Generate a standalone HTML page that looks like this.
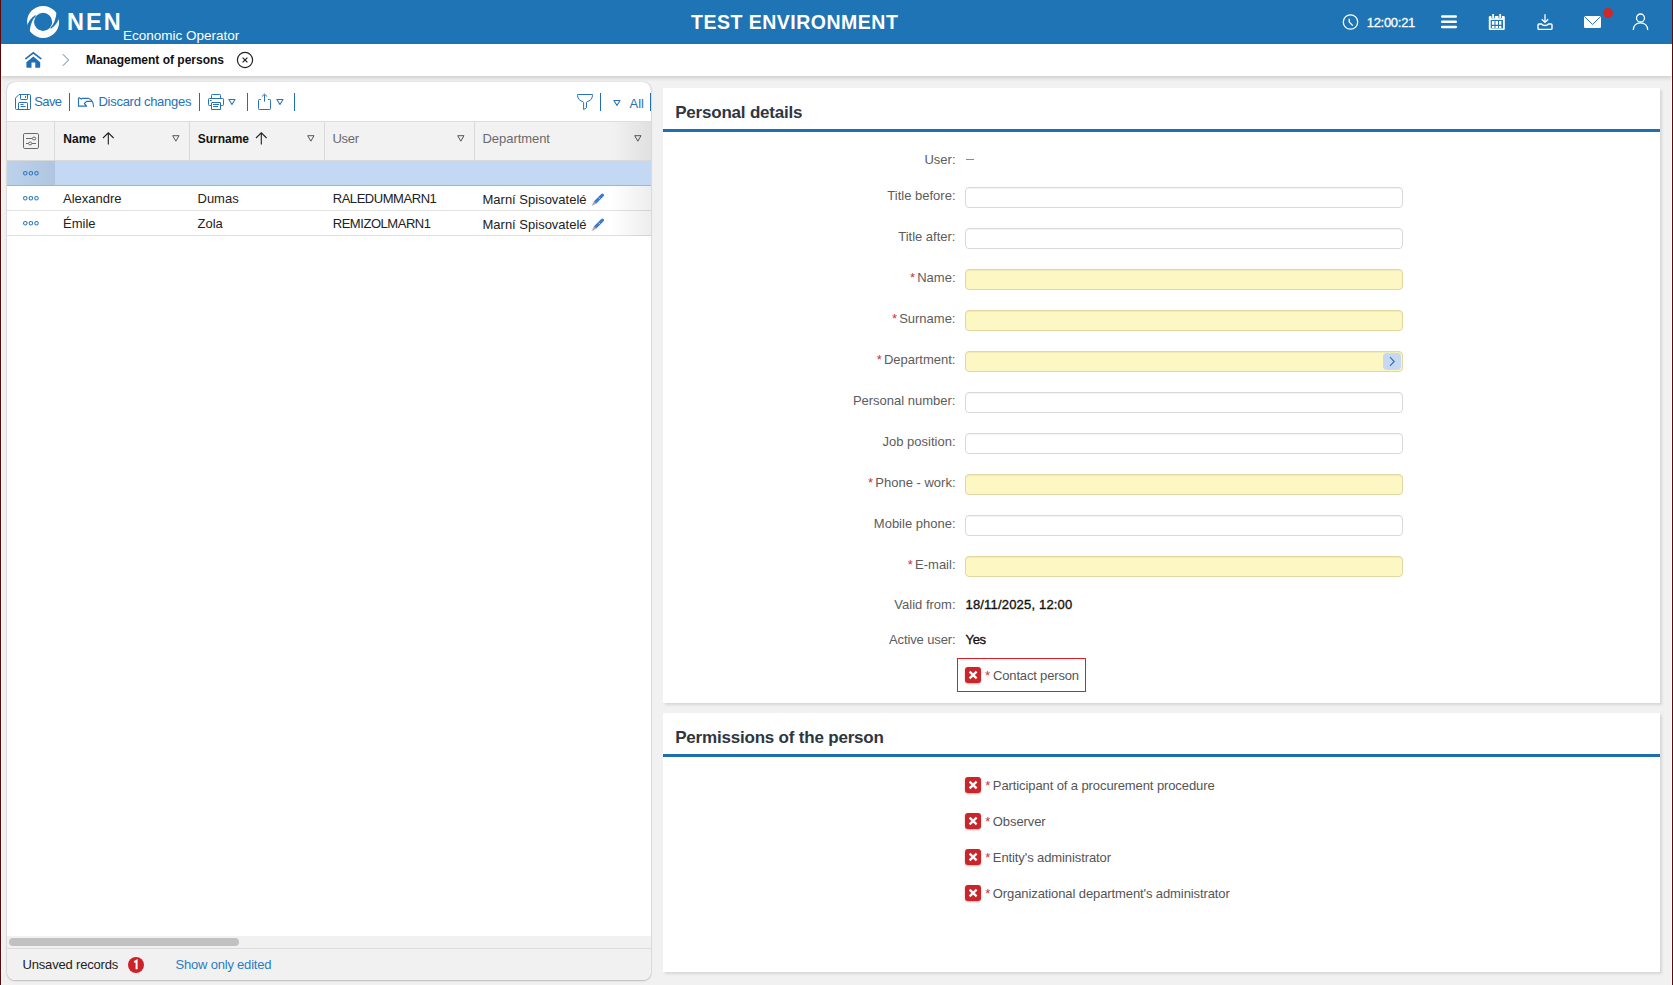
<!DOCTYPE html>
<html><head><meta charset="utf-8">
<style>
*{box-sizing:border-box;margin:0;padding:0}
html,body{width:1673px;height:985px;overflow:hidden}
body{background:#f1f1f1;font-family:"Liberation Sans",sans-serif;position:relative;color:#222}
.a{position:absolute;white-space:nowrap;line-height:1}
svg{position:absolute;overflow:visible}
#bl{left:0;top:0;width:1px;height:985px;background:#5c0a0a}
#br{left:1672px;top:0;width:1px;height:985px;background:#5c0a0a}
#hdr{left:1px;top:0;width:1671px;height:44px;background:#1e74b4}
#crumb{left:1px;top:44px;width:1671px;height:32px;background:#fff;box-shadow:0 1.5px 4px rgba(0,0,0,.15)}
#lp{left:7px;top:82px;width:644px;height:898px;background:#fff;border-radius:8px;box-shadow:0 0 1px rgba(0,0,0,.35),0 1px 2px rgba(0,0,0,.2);overflow:hidden}
.rp{position:absolute;background:#fff;box-shadow:1.5px 1.5px 2.5px rgba(0,0,0,.11)}
.title{position:absolute;left:12.2px;font-weight:bold;font-size:17px;letter-spacing:-0.2px;line-height:1;color:#30363f}
.bline{position:absolute;left:0;width:997px;height:3px;background:#1e6fb0}
.lbl{position:absolute;right:717.5px;font-size:13px;line-height:1;color:#5c5c5c;text-align:right;white-space:nowrap}
.req{color:#c8323a;font-size:13px;margin-right:2.2px}
.inp{position:absolute;left:965px;width:438px;height:21px;border:1px solid #d9d9d9;border-radius:4px;background:#fff;box-shadow:inset 0 1px 1px rgba(0,0,0,.05)}
.inp.y{background:#fdf7c3;border-color:#e0d8a0}
.cb{position:absolute;width:16px;height:16px;border-radius:3px;background:#c9262c;box-shadow:0 1px 2px rgba(160,0,0,.35)}
.cbl{position:absolute;font-size:13px;line-height:1;color:#555;white-space:nowrap;letter-spacing:-0.1px}
.sep{position:absolute;width:1px;height:18px;top:11px;background:#1f70b2}
.tb{position:absolute;font-size:13px;line-height:1;color:#2771b6;white-space:nowrap}
.th{position:absolute;font-size:12px;font-weight:bold;line-height:1;color:#111;white-space:nowrap}
.td{position:absolute;font-size:13px;line-height:1;color:#222;white-space:nowrap}
</style></head>
<body>
<div id="bl" class="a"></div><div id="br" class="a"></div>
<div class="a" style="left:1px;top:76px;width:1px;height:909px;background:#fcfcfc"></div><div class="a" style="left:1671px;top:76px;width:1px;height:909px;background:#fcfcfc"></div>

<!-- HEADER -->
<div id="hdr" class="a"></div>
<svg style="left:25px;top:4px" width="36" height="36" viewBox="0 0 36 36">
  <circle cx="18.1" cy="17.9" r="12.55" fill="none" stroke="#fff" stroke-width="6.9"/>
  <path d="M1.2 24.2 Q3.4 15.3 10.3 11.0 L10.9 12.1 Q5.8 16.8 4.6 27.6 Z" fill="#1e74b4"/>
  <path d="M35 11.6 Q32.8 20.5 25.9 24.8 L25.3 23.7 Q30.4 19 31.6 8.2 Z" fill="#1e74b4"/>
</svg>
<div class="a" style="left:67px;top:10.8px;font-size:23.5px;font-weight:bold;color:#fff;letter-spacing:2px">NEN</div>
<div class="a" style="left:123px;top:28.5px;font-size:13.5px;color:#fff">Economic Operator</div>
<div class="a" style="left:691px;top:12.6px;font-size:19.5px;font-weight:bold;color:#fff;letter-spacing:0.5px">TEST ENVIRONMENT</div>
<!-- clock -->
<svg style="left:1342px;top:14px" width="17" height="16" viewBox="0 0 17 16">
  <circle cx="8.5" cy="8" r="7.2" fill="none" stroke="#fff" stroke-width="1.3"/>
  <path d="M7.2 4.8 V8 L10.8 11.6" fill="none" stroke="#fff" stroke-width="1.3"/>
</svg>
<div class="a" style="left:1366.7px;top:16px;font-size:13px;color:#fff;letter-spacing:-0.28px;-webkit-text-stroke:0.3px #fff">12:00:21</div>
<!-- hamburger -->
<svg style="left:1441px;top:15px" width="16" height="14" viewBox="0 0 16 14">
  <path d="M1.2 1.6 H14.8 M1.2 6.8 H14.8 M1.2 12 H14.8" stroke="#fff" stroke-width="2.5" stroke-linecap="round"/>
</svg>
<!-- calendar -->
<svg style="left:1488px;top:14px" width="18" height="17" viewBox="0 0 18 17">
  <rect x="0.8" y="2" width="16" height="13.9" rx="1.2" fill="#fff"/>
  <rect x="2.7" y="5.9" width="12.3" height="8.5" fill="#1e74b4"/>
  <path d="M3.9 7.1h2.6v3.7h-2.6zM7.5 7.1h2.5v3.7h-2.5zM11 7.1h2.4v3.7h-2.4zM3.9 12h2.6v2h-2.6zM7.5 12h2.5v2h-2.5zM11 12h2.4v2h-2.4z" fill="#fff"/>
  <path d="M5.1 0 V4.2 M12.2 0 V4.2" stroke="#1e74b4" stroke-width="3.4"/>
  <path d="M5.1 0.1 V4 M12.2 0.1 V4" stroke="#fff" stroke-width="1.8"/>
</svg>
<!-- download -->
<svg style="left:1537px;top:14px" width="16" height="16" viewBox="0 0 16 16">
  <path d="M8 0.2 V8.2 M4.8 5.2 L8 8.4 L11.2 5.2" fill="none" stroke="#fff" stroke-width="1.3"/>
  <path d="M2 10 H4.5 C6 12 10 12 11.5 10 H14 C14.6 10 15 10.4 15 11 V14.4 C15 15 14.6 15.4 14 15.4 H2 C1.4 15.4 1 15 1 14.4 V11 C1 10.4 1.4 10 2 10 Z" fill="none" stroke="#fff" stroke-width="1.4"/>
</svg>
<!-- mail -->
<svg style="left:1584px;top:16px" width="17" height="12" viewBox="0 0 17 12">
  <rect x="0" y="0" width="17" height="12" rx="1.5" fill="#fff"/>
  <path d="M0.6 0.8 L8.5 8.4 L16.4 0.8" fill="none" stroke="#1e74b4" stroke-width="1"/>
</svg>
<svg style="left:1603px;top:8px" width="10" height="10" viewBox="0 0 10 10"><circle cx="5" cy="5" r="5" fill="#cc2a28"/></svg>
<!-- user -->
<svg style="left:1632px;top:13px" width="17" height="17" viewBox="0 0 17 17">
  <circle cx="8.5" cy="5" r="4" fill="none" stroke="#fff" stroke-width="1.3"/>
  <path d="M1.3 17 C1.3 12.3 4.5 9.8 8.5 9.8 C12.5 9.8 15.7 12.3 15.7 17" fill="none" stroke="#fff" stroke-width="1.3"/>
</svg>

<!-- BREADCRUMB -->
<div id="crumb" class="a"></div>
<svg style="left:25px;top:52px" width="17" height="16" viewBox="0 0 17 16">
  <path d="M0.8 6.6 L8.3 0.8 L15.8 6.6" fill="none" stroke="#1e6fb3" stroke-width="1.6" stroke-linecap="round"/>
  <path d="M1.4 10.2 L8.3 4.4 L15.2 10.2 V15 C15.2 15.5 14.8 15.8 14.3 15.8 H10.3 V10.6 H6.5 V15.8 H2.3 C1.8 15.8 1.4 15.5 1.4 15 Z" fill="#1e6fb3"/>
</svg>
<svg style="left:61px;top:53px" width="10" height="14" viewBox="0 0 10 14">
  <path d="M1.8 1.2 L7.6 7 L1.8 12.8" fill="none" stroke="#5a7fa8" stroke-width="1"/>
</svg>
<div class="a" style="left:86px;top:54px;font-size:12px;font-weight:bold;color:#111">Management of persons</div>
<svg style="left:236px;top:51px" width="18" height="18" viewBox="0 0 18 18">
  <circle cx="9" cy="9" r="7.6" fill="none" stroke="#222" stroke-width="1.2"/>
  <path d="M6.6 6.6 L11.4 11.4 M11.4 6.6 L6.6 11.4" stroke="#222" stroke-width="1.2"/>
</svg>

<!-- LEFT PANEL -->
<div id="lp" class="a">
  <!-- toolbar -->
  <svg style="left:8px;top:12px" width="17" height="17" viewBox="0 0 17 17">
    <path d="M4 0.5 H14.5 Q15.5 0.5 15.5 1.5 V14.5 Q15.5 15.5 14.5 15.5 H1.5 Q0.5 15.5 0.5 14.5 V4.1 Z" fill="none" stroke="#2a72b8" stroke-width="1" stroke-linejoin="round"/>
    <path d="M5.5 0.8 V4.8 Q5.5 5.5 6.2 5.5 H11.8 Q12.5 5.5 12.5 4.8 V0.8" fill="none" stroke="#2a72b8" stroke-width="1"/>
    <path d="M10.5 2 V3.8" stroke="#2a72b8" stroke-width="1"/>
    <path d="M3.5 15.2 V9.2 Q3.5 8.5 4.2 8.5 H11.8 Q12.5 8.5 12.5 9.2 V15.2" fill="none" stroke="#2a72b8" stroke-width="1"/>
    <path d="M5.5 10.5 H8.5 M5.5 12.5 H10.5" stroke="#2a72b8" stroke-width="1"/>
  </svg>
  <div class="tb" style="left:27.2px;top:12.8px;letter-spacing:-0.6px">Save</div>
  <div class="sep" style="left:62px"></div>
  <svg style="left:70px;top:14px" width="18" height="12" viewBox="0 0 18 12">
    <path d="M16.5 10.6 C16.5 7 14.5 3.4 11.2 2.3 H5.3 L4.3 3.1 L2.6 1.9 C2 1.7 1.5 2.1 1.5 2.7 V10.2 H9.6 L7.4 7.5 L9.6 5.3 H14.2" fill="none" stroke="#2a72b8" stroke-width="1.2" stroke-linejoin="round" stroke-linecap="round"/>
  </svg>
  <div class="tb" style="left:91.5px;top:12.7px;letter-spacing:-0.28px">Discard changes</div>
  <div class="sep" style="left:192px"></div>
  <svg style="left:201px;top:12px" width="17" height="17" viewBox="0 0 17 17">
    <path d="M3.5 4.5 V1.3 Q3.5 0.5 4.3 0.5 H11.7 Q12.5 0.5 12.5 1.3 V4.5" fill="none" stroke="#2a72b8" stroke-width="1"/>
    <path d="M3.5 11.5 H1.3 Q0.5 11.5 0.5 10.7 V5.3 Q0.5 4.5 1.3 4.5 H14.7 Q15.5 4.5 15.5 5.3 V10.7 Q15.5 11.5 14.7 11.5 H12.5" fill="none" stroke="#2a72b8" stroke-width="1"/>
    <path d="M3.5 15.5 V9 Q3.5 8.5 4 8.5 H12.5 V15.5 Z" fill="#fff" stroke="#2a72b8" stroke-width="1"/>
    <path d="M5 10.5 H11 M5 12.5 H10 M2 6.5 H3.6" stroke="#2a72b8" stroke-width="1"/>
  </svg>
  <svg style="left:221px;top:16px" width="8" height="8" viewBox="0 0 8 8"><path d="M0.9 1.5 H7 L3.95 6.5 Z" fill="none" stroke="#2a72b8" stroke-width="1.05" stroke-linejoin="round"/></svg>
  <div class="sep" style="left:240px"></div>
  <svg style="left:250px;top:11px" width="15" height="18" viewBox="0 0 15 18">
    <path d="M4 6.5 H2.3 Q1.5 6.5 1.5 7.3 V15.7 Q1.5 16.5 2.3 16.5 H12.7 Q13.5 16.5 13.5 15.7 V7.3 Q13.5 6.5 12.7 6.5 H11" fill="none" stroke="#2a72b8" stroke-width="1"/>
    <path d="M7.5 8.7 V1.6 M4.8 3.6 L7.5 1 L10.2 3.6" fill="none" stroke="#2a72b8" stroke-width="1"/>
  </svg>
  <svg style="left:268.5px;top:16px" width="8" height="8" viewBox="0 0 8 8"><path d="M0.9 1.5 H7 L3.95 6.5 Z" fill="none" stroke="#2a72b8" stroke-width="1.05" stroke-linejoin="round"/></svg>
  <div class="sep" style="left:287px"></div>
  <svg style="left:570px;top:12px" width="17" height="17" viewBox="0 0 17 17">
    <path d="M0.5 0.5 H15.5 V1.5 C15.5 5 12.6 7.1 10.2 7.6 Q9.5 7.8 9.5 8.5 V13.7 L6.6 15.5 V8.5 Q6.5 7.8 5.8 7.6 C3.4 7.1 0.5 5 0.5 1.5 Z" fill="none" stroke="#2a72b8" stroke-width="1" stroke-linejoin="round"/>
  </svg>
  <div class="sep" style="left:593px"></div>
  <svg style="left:606px;top:16.5px" width="8" height="8" viewBox="0 0 8 8"><path d="M0.9 1.5 H7 L3.95 6.5 Z" fill="none" stroke="#2a72b8" stroke-width="1.05" stroke-linejoin="round"/></svg>
  <div class="tb" style="left:622.5px;top:15px">All</div>
  <div class="sep" style="left:643px"></div>

  <!-- table header -->
  <div class="a" style="left:0;top:39px;width:644px;height:40px;background:#f2f2f2;border-top:1px solid #dedede;border-bottom:1px solid #d8d8d8"></div>
  <div class="a" style="left:47px;top:40px;width:1px;height:38px;background:#d9d9d9"></div>
  <div class="a" style="left:182px;top:40px;width:1px;height:38px;background:#d9d9d9"></div>
  <div class="a" style="left:317px;top:40px;width:1px;height:38px;background:#d9d9d9"></div>
  <div class="a" style="left:467px;top:40px;width:1px;height:38px;background:#d9d9d9"></div>
  <svg style="left:16px;top:51px" width="16" height="16" viewBox="0 0 16 16">
    <rect x="0.5" y="0.5" width="15" height="15" rx="1.3" fill="none" stroke="#6a6a6a" stroke-width="1"/>
    <path d="M3 5.5 H9.6 M3 10.5 H13" stroke="#6a6a6a" stroke-width="1"/>
    <ellipse cx="11.1" cy="5.5" rx="1.7" ry="1.4" fill="#f2f2f2" stroke="#6a6a6a" stroke-width="1"/>
    <ellipse cx="7.2" cy="10.5" rx="1.7" ry="1.4" fill="#f2f2f2" stroke="#6a6a6a" stroke-width="1"/>
  </svg>
  <div class="th" style="left:56.3px;top:51.1px">Name</div>
  <svg style="left:95px;top:50px" width="13" height="13" viewBox="0 0 13 13"><path d="M6.3 12.5 V0.8 M1 6 L6.3 0.8 L11.6 6" fill="none" stroke="#222" stroke-width="1.1"/></svg>
  <svg style="left:165px;top:53px" width="8" height="7" viewBox="0 0 8 7"><path d="M0.7 0.7 H7 L3.85 6.2 Z" fill="none" stroke="#555" stroke-width="1" stroke-linejoin="round"/></svg>
  <div class="th" style="left:190.7px;top:51.4px">Surname</div>
  <svg style="left:248px;top:50px" width="13" height="13" viewBox="0 0 13 13"><path d="M6.3 12.5 V0.8 M1 6 L6.3 0.8 L11.6 6" fill="none" stroke="#222" stroke-width="1.1"/></svg>
  <svg style="left:300px;top:53px" width="8" height="7" viewBox="0 0 8 7"><path d="M0.7 0.7 H7 L3.85 6.2 Z" fill="none" stroke="#555" stroke-width="1" stroke-linejoin="round"/></svg>
  <div class="td" style="left:325.5px;top:49.6px;color:#6a6a6a;letter-spacing:-0.3px">User</div>
  <svg style="left:450px;top:53px" width="8" height="7" viewBox="0 0 8 7"><path d="M0.7 0.7 H7 L3.85 6.2 Z" fill="none" stroke="#555" stroke-width="1" stroke-linejoin="round"/></svg>
  <div class="td" style="left:475.5px;top:49.6px;color:#6a6a6a;letter-spacing:-0.05px">Department</div>
  <svg style="left:627px;top:53px" width="8" height="7" viewBox="0 0 8 7"><path d="M0.7 0.7 H7 L3.85 6.2 Z" fill="none" stroke="#555" stroke-width="1" stroke-linejoin="round"/></svg>

  <!-- selected row -->
  <div class="a" style="left:0;top:79px;width:644px;height:25px;background:#c3d9f3;border-bottom:1px solid #8fb8e6"></div>
  <div class="a" style="left:0;top:79px;width:48px;height:24px;background:linear-gradient(90deg,#bcd1ea,#b0c6e0)"></div>
  <!-- rows -->
  <div class="a" style="left:0;top:128px;width:644px;height:1px;background:#e2e2e2"></div>
  <div class="a" style="left:0;top:153px;width:644px;height:1px;background:#e2e2e2"></div>
  <div class="td" style="left:56px;top:110px">Alexandre</div>
  <div class="td" style="left:190.5px;top:110px">Dumas</div>
  <div class="td" style="left:325.7px;top:110px;letter-spacing:-0.45px">RALEDUMMARN1</div>
  <div class="td" style="left:475.5px;top:111px">Marní Spisovatelé</div>
  <div class="td" style="left:56px;top:135px">Émile</div>
  <div class="td" style="left:190.5px;top:135px">Zola</div>
  <div class="td" style="left:325.7px;top:135px;letter-spacing:-0.45px">REMIZOLMARN1</div>
  <div class="td" style="left:475.5px;top:136px">Marní Spisovatelé</div>
  <svg style="left:16px;top:89px" width="16" height="5" viewBox="0 0 16 5"><circle cx="2.3" cy="2.2" r="1.75" fill="none" stroke="#2d77bd" stroke-width="1.05"/><circle cx="7.9" cy="2.2" r="1.75" fill="none" stroke="#2d77bd" stroke-width="1.05"/><circle cx="13.5" cy="2.2" r="1.75" fill="none" stroke="#2d77bd" stroke-width="1.05"/></svg>
  <svg style="left:16px;top:113.5px" width="16" height="5" viewBox="0 0 16 5"><circle cx="2.3" cy="2.2" r="1.75" fill="none" stroke="#2d77bd" stroke-width="1.05"/><circle cx="7.9" cy="2.2" r="1.75" fill="none" stroke="#2d77bd" stroke-width="1.05"/><circle cx="13.5" cy="2.2" r="1.75" fill="none" stroke="#2d77bd" stroke-width="1.05"/></svg>
  <svg style="left:16px;top:138.5px" width="16" height="5" viewBox="0 0 16 5"><circle cx="2.3" cy="2.2" r="1.75" fill="none" stroke="#2d77bd" stroke-width="1.05"/><circle cx="7.9" cy="2.2" r="1.75" fill="none" stroke="#2d77bd" stroke-width="1.05"/><circle cx="13.5" cy="2.2" r="1.75" fill="none" stroke="#2d77bd" stroke-width="1.05"/></svg>
  
  <svg style="left:584px;top:111px" width="14" height="14" viewBox="0 0 14 14"><path d="M11.4 2.2 L4.4 9.2" stroke="#3b7ccc" stroke-width="3.3" stroke-linecap="round"/><path d="M3.0 8.0 L5.6 10.6 L0.6 12.9 Z" fill="#aaa4b8"/><path d="M7.6 4.6 L9.1 6.1" stroke="#cfe0f5" stroke-width="0.7"/></svg>
  <svg style="left:584px;top:136px" width="14" height="14" viewBox="0 0 14 14"><path d="M11.4 2.2 L4.4 9.2" stroke="#3b7ccc" stroke-width="3.3" stroke-linecap="round"/><path d="M3.0 8.0 L5.6 10.6 L0.6 12.9 Z" fill="#aaa4b8"/><path d="M7.6 4.6 L9.1 6.1" stroke="#cfe0f5" stroke-width="0.7"/></svg>
  
  <!-- right fade -->
  <div class="a" style="left:604px;top:40px;width:40px;height:38px;background:linear-gradient(90deg,rgba(0,0,0,0),rgba(0,0,0,.075))"></div>
  <div class="a" style="left:603px;top:104px;width:41px;height:50px;background:linear-gradient(90deg,rgba(0,0,0,0),rgba(0,0,0,.07))"></div>

  <!-- scrollbar + footer -->
  <div class="a" style="left:0;top:854px;width:644px;height:12px;background:#f1f1f1"></div>
  <div class="a" style="left:2px;top:856px;width:230px;height:7.5px;border-radius:4px;background:#c1c1c1"></div>
  <div class="a" style="left:0;top:866px;width:644px;height:32px;background:#f1f1f1;border-top:1px solid #dcdcdc"></div>
  <div class="td" style="left:15.5px;top:876px;letter-spacing:-0.18px">Unsaved records</div>
  <svg style="left:121px;top:875px" width="16" height="16" viewBox="0 0 16 16"><circle cx="8" cy="8" r="8" fill="#cc2229"/><path d="M6.2 5.2 L8.6 3.8 V12.2" fill="none" stroke="#fff" stroke-width="2"/></svg>
  <div class="td" style="left:168.5px;top:876px;color:#2c7cc4;letter-spacing:-0.2px">Show only edited</div>
</div>

<!-- RIGHT PANEL 1 -->
<div class="rp" style="left:663px;top:88px;width:997px;height:615px">
  <div class="title" style="top:15.9px">Personal details</div>
  <div class="bline" style="top:41px"></div>
</div>

<!-- RIGHT PANEL 2 -->
<div class="rp" style="left:663px;top:713px;width:997px;height:259px">
  <div class="title" style="top:15.9px">Permissions of the person</div>
  <div class="bline" style="top:41px"></div>
</div>

<!-- FORM -->
<div class="lbl" style="top:152.7px">User:</div>
<div class="lbl" style="top:188.7px">Title before:</div>
<div class="inp" style="top:187px"></div>
<div class="lbl" style="top:229.7px">Title after:</div>
<div class="inp" style="top:228px"></div>
<div class="lbl" style="top:270.7px"><span class="req">*</span>Name:</div>
<div class="inp y" style="top:269px"></div>
<div class="lbl" style="top:311.7px"><span class="req">*</span>Surname:</div>
<div class="inp y" style="top:310px"></div>
<div class="lbl" style="top:352.7px"><span class="req">*</span>Department:</div>
<div class="inp y" style="top:351px"></div>
<div class="a" style="left:1383px;top:353px;width:18px;height:17px;border-radius:4px;background:#c5daf2"></div>
<svg style="left:1388px;top:356px" width="8" height="11" viewBox="0 0 8 11"><path d="M2 1.2 L6.2 5.5 L2 9.8" fill="none" stroke="#2a6bb5" stroke-width="1.1"/></svg>
<div class="lbl" style="top:393.7px">Personal number:</div>
<div class="inp" style="top:392px"></div>
<div class="lbl" style="top:434.7px">Job position:</div>
<div class="inp" style="top:433px"></div>
<div class="lbl" style="top:475.7px"><span class="req">*</span>Phone - work:</div>
<div class="inp y" style="top:474px"></div>
<div class="lbl" style="top:516.7px">Mobile phone:</div>
<div class="inp" style="top:515px"></div>
<div class="lbl" style="top:557.7px"><span class="req">*</span>E-mail:</div>
<div class="inp y" style="top:556px"></div>
<div class="a" style="left:966px;top:159px;width:8px;height:1px;background:#8c8c8c"></div>
<div class="lbl" style="top:597.8px">Valid from:</div>
<div class="a" style="left:965.5px;top:597.8px;font-size:13px;color:#111;letter-spacing:0.18px;-webkit-text-stroke:0.35px #111">18/11/2025, 12:00</div>
<div class="lbl" style="top:633.2px;letter-spacing:-0.12px">Active user:</div>
<div class="a" style="left:965.5px;top:633.2px;font-size:13px;color:#111;letter-spacing:-0.3px;-webkit-text-stroke:0.35px #111">Yes</div>
<div class="a" style="left:957px;top:658px;width:129px;height:34px;border:1px solid #e31b23"></div>
<div class="cb" style="left:965px;top:667px"></div><svg style="left:965px;top:667px" width="16" height="16" viewBox="0 0 16 16"><path d="M4.6 4.6 L11.6 11.4 M11.6 4.6 L4.6 11.4" stroke="#fff" stroke-width="2.3"/></svg>
<div class="cbl" style="left:985px;top:668.6px;letter-spacing:-0.17px"><span class="req" style="font-size:13px;top:0;margin-right:3px;letter-spacing:0">*</span>Contact person</div>
<div class="cb" style="left:965px;top:777px"></div><svg style="left:965px;top:777px" width="16" height="16" viewBox="0 0 16 16"><path d="M4.6 4.6 L11.6 11.4 M11.6 4.6 L4.6 11.4" stroke="#fff" stroke-width="2.3"/></svg>
<div class="cbl" style="left:985.3px;top:779.1px"><span class="req" style="font-size:13px;top:0;margin-right:2.6px">*</span>Participant of a procurement procedure</div>
<div class="cb" style="left:965px;top:813px"></div><svg style="left:965px;top:813px" width="16" height="16" viewBox="0 0 16 16"><path d="M4.6 4.6 L11.6 11.4 M11.6 4.6 L4.6 11.4" stroke="#fff" stroke-width="2.3"/></svg>
<div class="cbl" style="left:985.3px;top:815.1px"><span class="req" style="font-size:13px;top:0;margin-right:2.6px">*</span>Observer</div>
<div class="cb" style="left:965px;top:849px"></div><svg style="left:965px;top:849px" width="16" height="16" viewBox="0 0 16 16"><path d="M4.6 4.6 L11.6 11.4 M11.6 4.6 L4.6 11.4" stroke="#fff" stroke-width="2.3"/></svg>
<div class="cbl" style="left:985.3px;top:851.1px"><span class="req" style="font-size:13px;top:0;margin-right:2.6px">*</span>Entity's administrator</div>
<div class="cb" style="left:965px;top:885px"></div><svg style="left:965px;top:885px" width="16" height="16" viewBox="0 0 16 16"><path d="M4.6 4.6 L11.6 11.4 M11.6 4.6 L4.6 11.4" stroke="#fff" stroke-width="2.3"/></svg>
<div class="cbl" style="left:985.3px;top:887.1px"><span class="req" style="font-size:13px;top:0;margin-right:2.6px">*</span>Organizational department's administrator</div>
</body></html>
